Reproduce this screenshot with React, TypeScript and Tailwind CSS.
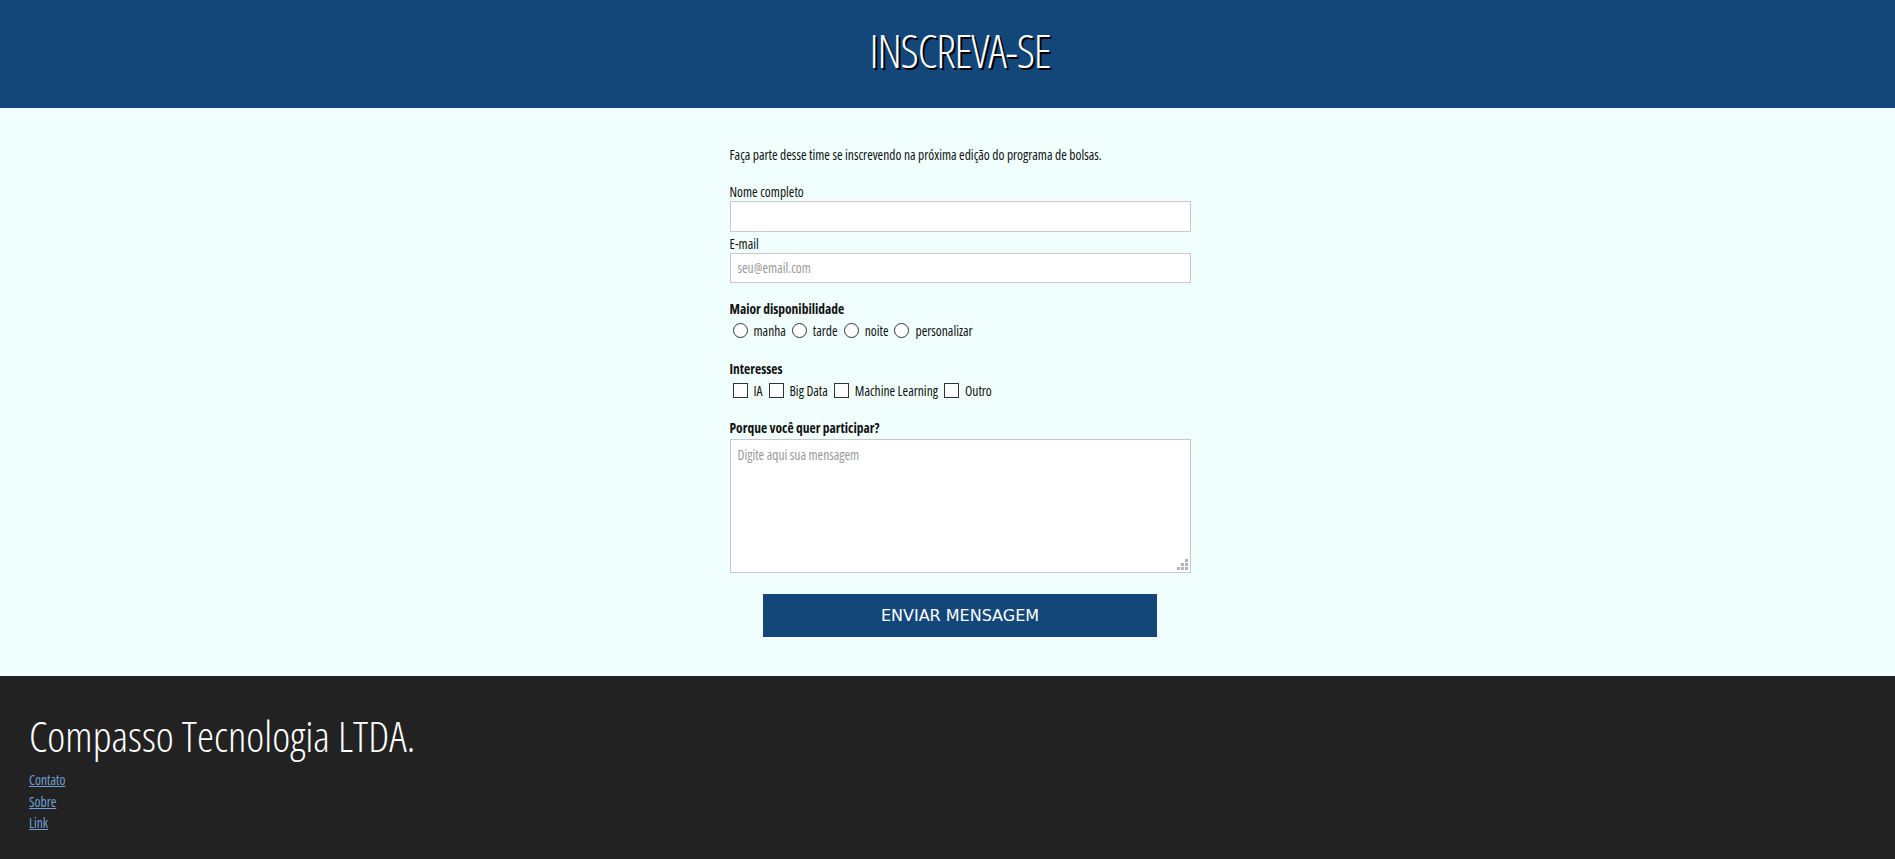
import React from 'react';

const condensed: React.CSSProperties = { fontStretch: 'condensed' };

const periods = ['manha', 'tarde', 'noite', 'personalizar'];
const interests = ['IA', 'Big Data', 'Machine Learning', 'Outro'];
const links = ['Contato', 'Sobre', 'Link'];

// old-style chrome resize grip: little dots in a stair
const Grip = () => (
  <svg width="11" height="11" viewBox="0 0 11 11" className="absolute right-[3px] bottom-[3px] pointer-events-none">
    <rect x="8" y="0" width="3" height="3" fill="#b4b4b4" />
    <rect x="4" y="4" width="3" height="3" fill="#b4b4b4" />
    <rect x="8" y="4" width="3" height="3" fill="#b4b4b4" />
    <rect x="0" y="8" width="3" height="3" fill="#b4b4b4" />
    <rect x="4" y="8" width="3" height="3" fill="#b4b4b4" />
    <rect x="8" y="8" width="3" height="3" fill="#b4b4b4" />
  </svg>
);

const App: React.FC = () => {
  return (
    <div
      className="min-h-screen flex flex-col font-['Open_Sans','DejaVu_Sans_Condensed',sans-serif] text-[#111]"
      style={condensed}
    >
      <header className="h-[108px] bg-[#13477a] flex items-center justify-center">
        <h1 className="text-[46px] font-light text-white leading-none tracking-[-1.2px] [text-shadow:2px_2px_0_#000] pl-[25px] pb-[8px]">
          INSCREVA-SE
        </h1>
      </header>

      <main className="bg-[#f0fffe] flex justify-center pl-[25px] pt-[38px] pb-[39px]">
        <form className="w-[461px] flex flex-col text-[13.5px]" onSubmit={(e) => e.preventDefault()}>
          <p className="leading-[18px]">
            Faça parte desse time se inscrevendo na próxima edição do programa de bolsas.
          </p>

          <label className="mt-[19px] leading-[18px]">Nome completo</label>
          <input
            type="text"
            className="h-[31px] bg-white border border-[#c8c8c8] px-2 outline-none"
          />

          <label className="mt-[3px] leading-[18px]">E-mail</label>
          <input
            type="email"
            placeholder="seu@email.com"
            className="h-[30px] bg-white border border-[#c8c8c8] px-[7px] outline-none placeholder:text-[#9a9a9a]"
          />

          <span className="mt-[17px] leading-[18px] font-bold">Maior disponibilidade</span>
          <div className="flex items-center h-[24px] pl-[3px] gap-[6px]">
            {periods.map((p) => (
              <label key={p} className="flex items-center gap-[6px]">
                <input
                  type="radio"
                  name="periodo"
                  className="appearance-none m-0 w-[15px] h-[15px] rounded-full border border-[#333] bg-white checked:bg-[radial-gradient(circle,#333_35%,#fff_40%)]"
                />
                <span className="mt-[3px]">{p}</span>
              </label>
            ))}
          </div>

          <span className="mt-[18px] leading-[18px] font-bold">Interesses</span>
          <div className="flex items-center h-[24px] pl-[3px] gap-[6px]">
            {interests.map((i) => (
              <label key={i} className="flex items-center gap-[6px]">
                <input
                  type="checkbox"
                  className="appearance-none m-0 w-[15px] h-[15px] border border-[#333] bg-white checked:bg-[#333]"
                />
                <span className="mt-[3px]">{i}</span>
              </label>
            ))}
          </div>

          <span className="mt-[17px] leading-[18px] font-bold">Porque você quer participar?</span>
          <div className="relative mt-[2px]">
            <textarea
              placeholder="Digite aqui sua mensagem"
              className="block w-full h-[134px] resize-none bg-white border border-[#c8c8c8] px-[7px] py-[5px] outline-none placeholder:text-[#9a9a9a]"
            />
            <Grip />
          </div>

          <button
            type="submit"
            className="mt-[21px] self-center w-[394px] h-[43px] bg-[#13477a] text-white text-[16px] font-['DejaVu_Sans',sans-serif]"
            style={{ fontStretch: 'normal' }}
          >
            ENVIAR MENSAGEM
          </button>
        </form>
      </main>

      <footer className="flex-1 bg-[#222222] px-[29px] pt-[32px] pb-[30px]">
        <h2 className="text-[43px] font-light text-white leading-[56px]">Compasso Tecnologia LTDA.</h2>
        <ul className="mt-[6px] flex flex-col text-[13.5px] leading-[21.5px]">
          {links.map((l) => (
            <li key={l}>
              <a href="#" className="text-[#6fa0d6] underline">
                {l}
              </a>
            </li>
          ))}
        </ul>
      </footer>
    </div>
  );
};

export default App;
